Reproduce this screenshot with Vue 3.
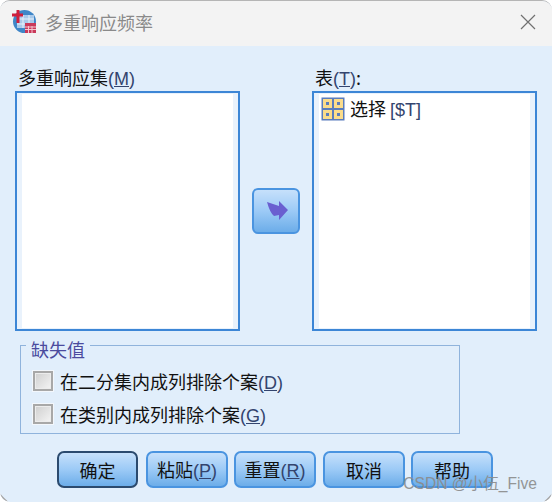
<template>
  <div class="window">
    <div class="titlebar">
      <svg class="app-icon" width="25" height="25" viewBox="0 0 25 25">
        <circle cx="12.5" cy="12.5" r="11.5" fill="#3f86c8" />
        <path d="M5 6h17v13H5z" fill="#a9c9ea" />
        <path d="M5 10h17M5 15h17M11 6v13M17 6v13" stroke="#e6f0fa" stroke-width="1" />
        <path d="M0 6h11M6 1v13" stroke="#d01f3c" stroke-width="3" />
        <rect x="13" y="14" width="11" height="10" fill="#c9395a" />
        <path d="M13 18h11M13 20.5h11M16.5 17v7M20 17v7" stroke="#f4c5cf" stroke-width="1" />
      </svg>
      <span class="title">{{ title }}</span>
      <svg class="close" width="16" height="16" viewBox="0 0 16 16">
        <path d="M1 1l14 14M15 1L1 15" stroke="#707070" stroke-width="1.2" fill="none" />
      </svg>
    </div>

    <div class="content">
      <div class="lists">
        <div class="column">
          <label class="list-label">多重响应集<span class="key">(<u>M</u>)</span></label>
          <div class="listbox"><div class="listbox-inner"></div></div>
        </div>

        <div class="arrow-col">
          <button class="arrow-btn">
            <svg width="24" height="20" viewBox="0 0 24 20">
              <path d="M3 1l12 4V0l9 9-9 10v-5l-5 1Q6 12 3 1z" fill="#6a5fd0" />
            </svg>
          </button>
        </div>

        <div class="column">
          <label class="list-label">表<span class="key">(<u>T</u>)</span>:</label>
          <div class="listbox">
            <div class="listbox-inner">
              <div class="list-item">
                <svg width="24" height="24" viewBox="0 0 24 24">
                  <rect x="0.5" y="0.5" width="23" height="23" fill="#5a7dbd" />
                  <g v-for="c in cells" :key="c.id">
                    <rect :x="c.x" :y="c.y" width="9" height="9" fill="#fbdc8a" />
                    <rect :x="c.x + 3" :y="c.y + 3" width="3" height="3" fill="#5a7dbd" />
                  </g>
                </svg>
                <span>选择 <span class="latin">[$T]</span></span>
              </div>
            </div>
          </div>
        </div>
      </div>

      <div class="missing">
        <div class="legend">缺失值</div>
        <label v-for="opt in options" :key="opt.key" class="option">
          <span class="checkbox"></span>
          <span>{{ opt.text }}<span class="key">(<u>{{ opt.key }}</u>)</span></span>
        </label>
      </div>

      <div class="buttons">
        <button v-for="b in buttons" :key="b.text" :class="['btn', { primary: b.primary, 'extra-gap': b.extraGap }]">
          {{ b.text }}<span v-if="b.key" class="key">(<u>{{ b.key }}</u>)</span>
        </button>
      </div>
    </div>

    <div class="watermark">CSDN @小伍_Five</div>
  </div>
</template>

<script setup>
const title = '多重响应频率'

const cells = [
  { id: 1, x: 2, y: 2 },
  { id: 2, x: 13, y: 2 },
  { id: 3, x: 2, y: 13 },
  { id: 4, x: 13, y: 13 },
]

const options = [
  { text: '在二分集内成列排除个案', key: 'D' },
  { text: '在类别内成列排除个案', key: 'G' },
]

const buttons = [
  { text: '确定', primary: true },
  { text: '粘贴', key: 'P' },
  { text: '重置', key: 'R', extraGap: true },
  { text: '取消' },
  { text: '帮助' },
]
</script>

<style>
html,
body {
  background: #fff;
}
</style>

<style scoped>
.window {
  position: relative;
  width: 552px;
  height: 502px;
  box-sizing: border-box;
  border-top: 1px solid #b5b5b5;
  border-radius: 10px;
  overflow: hidden;
  background: #e1eefb;
  font-family: "Noto Sans CJK SC", "Liberation Sans", sans-serif;
  font-size: 18px;
  color: #111;
}

/* grey arcs on the two bottom corners */
.window::before,
.window::after {
  content: "";
  position: absolute;
  bottom: 0;
  width: 10px;
  height: 10px;
  border-bottom: 2px solid #a8a8a8;
}

.window::before {
  left: 0;
  border-left: 2px solid #a8a8a8;
  border-bottom-left-radius: 10px;
  clip-path: polygon(0 30%, 70% 100%, 0 100%);
}

.window::after {
  right: 0;
  border-right: 2px solid #a8a8a8;
  border-bottom-right-radius: 10px;
  clip-path: polygon(100% 30%, 100% 100%, 30% 100%);
}

.titlebar {
  display: flex;
  align-items: center;
  height: 45px;
  box-sizing: border-box;
  padding: 0 16px 4px 12px;
  background: #f3f3f3;
}

.app-icon {
  margin-right: 8px;
}

.title {
  flex: 1;
  color: #8a8a8a;
  line-height: 24px;
}

.content {
  padding: 18px 15px 0;
}

.lists {
  display: flex;
}

.column {
  width: 225px;
}

.list-label {
  display: block;
  height: 27px;
  line-height: 27px;
  padding-left: 3px;
  white-space: nowrap;
}

.key {
  font-family: "Liberation Sans", sans-serif;
  color: #33446e;
}

.listbox {
  box-sizing: border-box;
  height: 240px;
  border: 2px solid #3c86d6;
  padding: 1px 5px;
  background: #e9f2fc;
}

.listbox-inner {
  height: 100%;
  background: #fff;
}

.list-item {
  display: flex;
  align-items: center;
  gap: 5px;
  padding-top: 2px;
  margin-left: 2px;
  line-height: 24px;
}

.latin {
  font-family: "Liberation Sans", sans-serif;
  font-size: 18px;
  color: #33446e;
}

.arrow-col {
  display: flex;
  justify-content: center;
  width: 72px;
  padding-top: 124px;
}

.arrow-btn,
.btn {
  border: 2px solid #4a94e0;
  background: linear-gradient(#c6e0fb, #9ccaf6 50%, #6cade9);
  padding: 0;
  cursor: pointer;
}

.arrow-btn {
  display: flex;
  align-items: center;
  justify-content: center;
  width: 48px;
  height: 46px;
  border-radius: 6px;
}

.missing {
  position: relative;
  box-sizing: border-box;
  width: 440px;
  height: 89px;
  margin: 14px 0 0 5px;
  padding: 18px 0 0 12px;
  border: 1px solid #8fb3dc;
}

.legend {
  position: absolute;
  left: 5px;
  top: -8px;
  padding: 0 5px;
  line-height: 22px;
  background: #e1eefb;
  color: #4b4b9e;
}

.option {
  display: flex;
  align-items: center;
  gap: 7px;
  height: 33px;
  white-space: nowrap;
}

.checkbox {
  box-sizing: border-box;
  width: 20px;
  height: 20px;
  border: 2px solid #a8a8a8;
  outline: 1px solid #f3f7fc;
  box-shadow: inset 0 0 0 1px #ececec;
  background: linear-gradient(135deg, #cfcfcf, #f4f4f4);
}

.buttons {
  display: flex;
  gap: 6px;
  margin: 17px 0 0 42px;
}

.btn {
  width: 82px;
  height: 37px;
  border-radius: 7px;
  font: inherit;
  color: #111;
  line-height: 1;
  white-space: nowrap;
}

.btn.primary {
  width: 81px;
  margin-right: 2px;
  border-color: #2b4a6e;
}

.btn.extra-gap {
  margin-right: 1px;
}

.watermark {
  position: absolute;
  right: 15px;
  bottom: 9px;
  font-family: "Liberation Sans", "Noto Sans CJK SC", sans-serif;
  font-size: 15.6px;
  line-height: 18px;
  color: #8b8b8b;
  opacity: 0.9;
}
</style>
